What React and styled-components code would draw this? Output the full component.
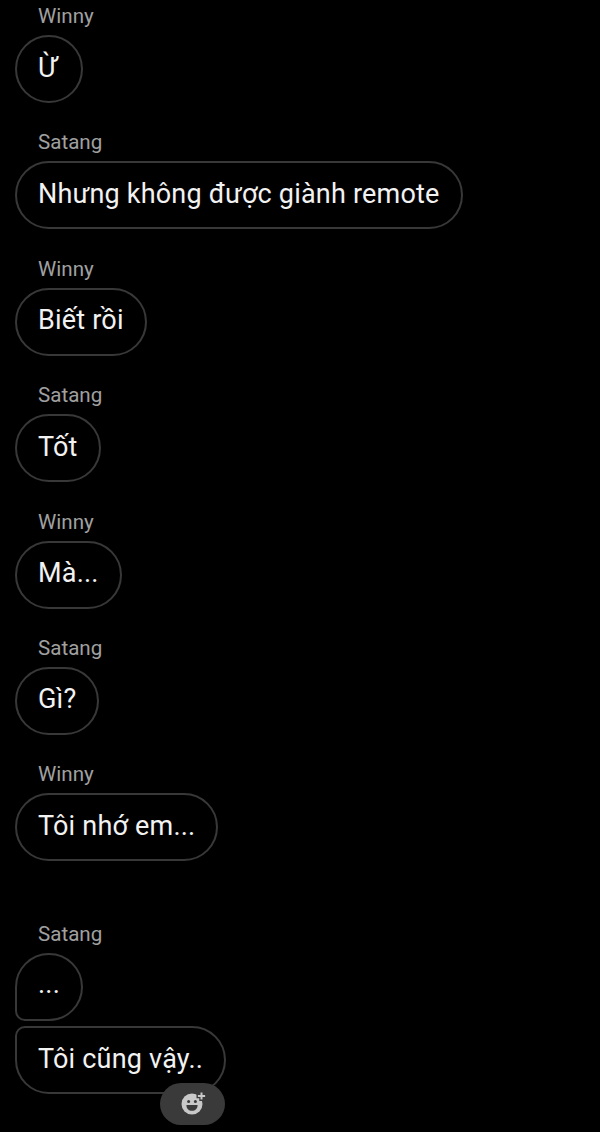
import React from 'react'
import styled, { createGlobalStyle } from 'styled-components'

const GlobalStyle = createGlobalStyle`
  html, body {
    margin: 0;
    padding: 0;
    background: #000;
  }
`

const messages = [
  { name: 'Winny', lines: ['Ừ'] },
  { name: 'Satang', lines: ['Nhưng không được giành remote'] },
  { name: 'Winny', lines: ['Biết rồi'] },
  { name: 'Satang', lines: ['Tốt'] },
  { name: 'Winny', lines: ['Mà...'] },
  { name: 'Satang', lines: ['Gì?'] },
  { name: 'Winny', lines: ['Tôi nhớ em...'] },
  { name: 'Satang', lines: ['...', 'Tôi cũng vậy..'], gapBefore: true },
]

function App() {
  return (
    <Page>
      <GlobalStyle />
      {messages.map((m, i) => (
        <Group key={i} $gapBefore={m.gapBefore}>
          <Name>{m.name}</Name>
          <Stack>
            {m.lines.map((line, j) => (
              <Bubble
                key={j}
                $first={j === 0 && m.lines.length > 1}
                $last={j > 0}
                $dots={line === '...'}
              >
                {line}
                {j > 0 && (
                  <Reaction>
                    <svg width="28" height="28" viewBox="0 0 28 28">
                      <circle cx="13" cy="14" r="10.5" fill="#c8c8c8" />
                      <circle cx="9.6" cy="11.4" r="1.5" fill="#3a3a3a" />
                      <circle cx="16.4" cy="11.4" r="1.5" fill="#3a3a3a" />
                      <path d="M7.4 15h11.2c0 3.6-2.4 5.8-5.6 5.8s-5.6-2.2-5.6-5.8z" fill="#3a3a3a" />
                      <path d="M22.5 1v10M17.5 6h10" stroke="#3a3a3a" strokeWidth="4.4" />
                      <path d="M22.5 2.4v7.2M18.9 6h7.2" stroke="#c8c8c8" strokeWidth="2" />
                    </svg>
                  </Reaction>
                )}
              </Bubble>
            ))}
          </Stack>
        </Group>
      ))}
    </Page>
  )
}

const Page = styled.div`
  width: 600px;
  height: 1132px;
  overflow: hidden;
  background: #000;
  padding: 4px 0 0 15px;
  box-sizing: border-box;
  font-family: Roboto, sans-serif;
`

const Group = styled.div`
  display: flex;
  flex-direction: column;
  align-items: flex-start;
  gap: 7px;
  margin-top: ${(p) => (p.$gapBefore ? '61px' : '0')};
  margin-bottom: 27.4px;
`

const Name = styled.div`
  padding-left: 23px;
  font-size: 20.6px;
  line-height: 24px;
  color: #a0a0a0;
`

const Stack = styled.div`
  display: flex;
  flex-direction: column;
  align-items: flex-start;
  gap: 5px;
`

const Bubble = styled.div`
  position: relative;
  box-sizing: border-box;
  height: 68px;
  min-width: 68px;
  padding: 0 21px ${(p) => (p.$dots ? '7px' : '3px')} 21px;
  display: flex;
  align-items: center;
  font-size: 27px;
  letter-spacing: 0.2px;
  color: #f2f2f2;
  border: 2px solid #383838;
  border-radius: 34px;
  border-bottom-left-radius: ${(p) => (p.$first ? '10px' : '34px')};
  border-top-left-radius: ${(p) => (p.$last ? '10px' : '34px')};
`

const Reaction = styled.div`
  position: absolute;
  right: -1px;
  bottom: -33px;
  width: 65px;
  height: 42px;
  border-radius: 21px;
  background: #3a3a3a;
  display: flex;
  align-items: center;
  justify-content: center;
`

export default App
